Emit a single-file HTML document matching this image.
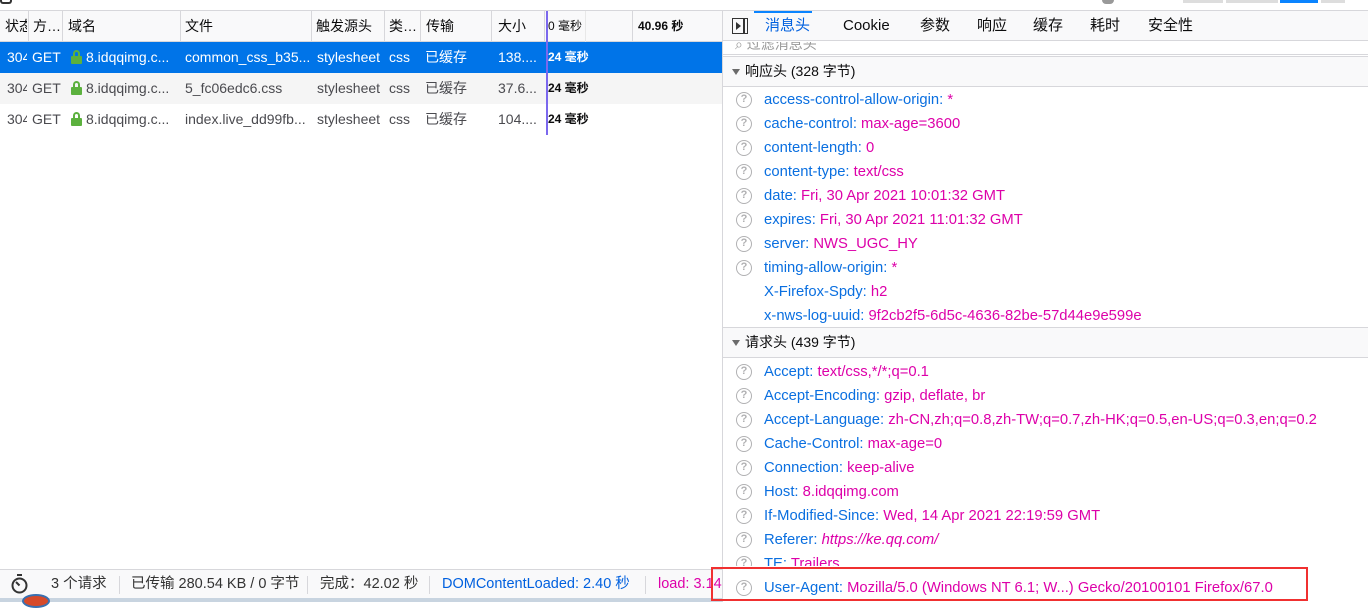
<!DOCTYPE html>
<html><head><meta charset="utf-8"><style>
*{margin:0;padding:0;box-sizing:border-box}
body{width:1368px;height:602px;overflow:hidden;background:#fff;font-family:"Liberation Sans","Noto Sans CJK SC",sans-serif;font-size:14px;color:#0c0c0d;position:relative}
.a{position:absolute;white-space:nowrap}
.top{left:0;top:0;width:1368px;height:11px;border-bottom:1px solid #d7d7db;background:#fff}
.hdr{left:0;top:11px;width:722px;height:31px;background:#f9f9fa;border-bottom:1px solid #d7d7db}
.row{left:0;width:722px;height:31px;line-height:31px}
.c{position:absolute;top:0;overflow:hidden;white-space:nowrap}
.vb{position:absolute;top:0;width:1px;height:31px;background:#d7d7db}
.lock{display:inline-block;width:11px;height:14px;position:relative;vertical-align:-2px;margin-right:4px}
.lock:before{content:"";position:absolute;left:2px;top:0;width:7px;height:8px;border:2px solid #5cb13e;border-bottom:none;border-radius:4px 4px 0 0;box-sizing:border-box}
.lock:after{content:"";position:absolute;left:0;top:6px;width:11px;height:8px;background:#5cb13e;border-radius:1px}
.right{left:722px;top:11px;width:646px;height:591px;border-left:1px solid #d7d7db;background:#fff}
.tabs{left:0;top:0;width:646px;height:30px;background:#f9f9fa;border-bottom:1px solid #d7d7db;font-size:15px;line-height:30px}
.sec{left:0;width:646px;height:31px;background:#f9f9fa;border-top:1px solid #d7d7db;border-bottom:1px solid #d7d7db;line-height:29px;padding-left:22px}
.sec:before{content:"";position:absolute;left:9px;top:12px;border-left:4px solid transparent;border-right:4px solid transparent;border-top:6px solid #6b6b6b}
.kv{left:0;height:24px;line-height:24px;font-size:14.8px}
.q{position:absolute;left:13px;top:4px;width:16px;height:16px;border:1.5px solid #b1b1b3;border-radius:50%;color:#b1b1b3;font-size:11px;line-height:13px;text-align:center;font-weight:bold;font-style:normal}
.k{position:absolute;left:41px;color:#0a6fe0}
.v{color:#dd00a9}
.sb{left:0;top:569px;width:722px;height:30px;background:#f9f9fa;border-top:1px solid #d7d7db;line-height:29px;font-size:14.5px;color:#333}
.sb span{position:absolute;top:0}
.sep{position:absolute;top:6px;width:1px;height:18px;background:#d7d7db}
</style></head><body>
<div class="a top"></div>
<div class="a" style="left:0;top:0;width:12px;height:4px;border:2px solid #333;border-top:none;border-radius:0 0 3px 3px"></div>
<div class="a" style="left:1102px;top:0;width:12px;height:4px;background:#999;border-radius:0 0 6px 6px"></div>
<div class="a" style="left:1183px;top:0;width:40px;height:3px;background:#ddd"></div>
<div class="a" style="left:1226px;top:0;width:52px;height:3px;background:#ddd"></div>
<div class="a" style="left:1280px;top:0;width:38px;height:3px;background:#0a84ff"></div>
<div class="a" style="left:1321px;top:0;width:24px;height:3px;background:#ddd"></div>

<div class="a hdr">
 <span class="c" style="left:5px;line-height:31px;width:22px">状态</span>
 <div class="vb" style="left:28px"></div>
 <span class="c" style="left:33px;line-height:31px">方…</span>
 <div class="vb" style="left:62px"></div>
 <span class="c" style="left:68px;line-height:31px">域名</span>
 <div class="vb" style="left:180px"></div>
 <span class="c" style="left:185px;line-height:31px">文件</span>
 <div class="vb" style="left:311px"></div>
 <span class="c" style="left:316px;line-height:31px">触发源头</span>
 <div class="vb" style="left:384px"></div>
 <span class="c" style="left:389px;line-height:31px">类…</span>
 <div class="vb" style="left:420px"></div>
 <span class="c" style="left:426px;line-height:31px">传输</span>
 <div class="vb" style="left:491px"></div>
 <span class="c" style="left:498px;line-height:31px">大小</span>
 <div class="vb" style="left:544px"></div>
 <span class="c" style="left:548px;line-height:31px;font-size:12px">0 毫秒</span>
 <div class="vb" style="left:585px;background:#e8e8e8"></div>
 <div class="vb" style="left:632px"></div>
 <span class="c" style="left:638px;line-height:31px;font-size:12px;font-weight:bold">40.96 秒</span>
</div>

<div class="a row" style="top:42px;background:#0074e8;color:#fff">
 <span class="c" style="left:7px;width:20px">304</span><span class="c" style="left:32px">GET</span>
 <span class="c" style="left:71px;width:108px"><i class="lock"></i>8.idqqimg.c...</span>
 <span class="c" style="left:185px">common_css_b35...</span><span class="c" style="left:317px">stylesheet</span><span class="c" style="left:389px">css</span><span class="c" style="left:425px">已缓存</span><span class="c" style="left:498px">138....</span>
 <span class="c" style="left:548px;font-size:12px;font-weight:bold">24 毫秒</span>
</div>
<div class="a row" style="top:73px;background:#f5f5f5;color:#4a4a4f">
 <span class="c" style="left:7px;width:20px">304</span><span class="c" style="left:32px">GET</span>
 <span class="c" style="left:71px;width:108px"><i class="lock"></i>8.idqqimg.c...</span>
 <span class="c" style="left:185px">5_fc06edc6.css</span><span class="c" style="left:317px">stylesheet</span><span class="c" style="left:389px">css</span><span class="c" style="left:425px">已缓存</span><span class="c" style="left:498px">37.6...</span>
 <span class="c" style="left:548px;font-size:12px;font-weight:bold;color:#0c0c0d">24 毫秒</span>
</div>
<div class="a row" style="top:104px;color:#4a4a4f">
 <span class="c" style="left:7px;width:20px">304</span><span class="c" style="left:32px">GET</span>
 <span class="c" style="left:71px;width:108px"><i class="lock"></i>8.idqqimg.c...</span>
 <span class="c" style="left:185px">index.live_dd99fb...</span><span class="c" style="left:317px">stylesheet</span><span class="c" style="left:389px">css</span><span class="c" style="left:425px">已缓存</span><span class="c" style="left:498px">104....</span>
 <span class="c" style="left:548px;font-size:12px;font-weight:bold;color:#0c0c0d">24 毫秒</span>
</div>
<div class="a" style="left:546px;top:11px;width:2px;height:124px;background:#7b68ee"></div>

<div class="a sb">
 <span style="left:10px;top:4px;width:19px;height:20px"><svg width="19" height="20" viewBox="0 0 19 20"><rect x="7" y="0" width="5" height="2" fill="#333"/><circle cx="9.5" cy="11.5" r="7" fill="none" stroke="#333" stroke-width="2"/><path d="M9.5 11.5 L6 8" stroke="#333" stroke-width="2"/></svg></span>
 <span style="left:51px">3 个请求</span><div class="sep" style="left:119px"></div>
 <span style="left:131px">已传输 280.54 KB / 0 字节</span><div class="sep" style="left:307px"></div>
 <span style="left:320px">完成：42.02 秒</span><div class="sep" style="left:429px"></div>
 <span style="left:442px;color:#0060df">DOMContentLoaded: 2.40 秒</span><div class="sep" style="left:645px"></div>
 <span style="left:658px;color:#dd00a9">load: 3.14 秒</span>
</div>
<div class="a" style="left:0;top:598px;width:722px;height:4px;background:#c8d4e0"></div>
<div class="a" style="left:22px;top:594px;width:28px;height:14px;border-radius:50%;background:#d64a2a;border:2px solid #3a70b0"></div>

<div class="a right">
 <div class="a tabs">
  <div class="a" style="left:9px;top:7px;width:16px;height:16px;border:1.5px solid #333"></div>
  <div class="a" style="left:13px;top:11px;border-top:4px solid transparent;border-bottom:4px solid transparent;border-left:5px solid #333"></div>
  <div class="a" style="left:20px;top:7px;width:1.5px;height:16px;background:#333"></div>
  <div class="a" style="left:31px;top:0;width:58px;height:2px;background:#0a84ff"></div>
  <span class="a" style="left:42px;color:#0060df">消息头</span>
  <span class="a" style="left:120px">Cookie</span>
  <span class="a" style="left:197px">参数</span>
  <span class="a" style="left:254px">响应</span>
  <span class="a" style="left:310px">缓存</span>
  <span class="a" style="left:367px">耗时</span>
  <span class="a" style="left:425px">安全性</span>
 </div>
 <div class="a" style="left:0;top:31px;width:646px;height:13px;overflow:hidden;border-bottom:1px solid #d7d7db"><span class="a" style="left:12px;top:-8px;color:#999;font-size:14px">⌕ 过滤消息头</span></div>
 <div class="a sec" style="top:45px">响应头 (328 字节)</div>
 <div class="a kv" style="top:77px;width:646px"><i class="q">?</i><span class="k">access-control-allow-origin: <span class="v">*</span></span></div>
 <div class="a kv" style="top:101px;width:646px"><i class="q">?</i><span class="k">cache-control: <span class="v">max-age=3600</span></span></div>
 <div class="a kv" style="top:125px;width:646px"><i class="q">?</i><span class="k">content-length: <span class="v">0</span></span></div>
 <div class="a kv" style="top:149px;width:646px"><i class="q">?</i><span class="k">content-type: <span class="v">text/css</span></span></div>
 <div class="a kv" style="top:173px;width:646px"><i class="q">?</i><span class="k">date: <span class="v">Fri, 30 Apr 2021 10:01:32 GMT</span></span></div>
 <div class="a kv" style="top:197px;width:646px"><i class="q">?</i><span class="k">expires: <span class="v">Fri, 30 Apr 2021 11:01:32 GMT</span></span></div>
 <div class="a kv" style="top:221px;width:646px"><i class="q">?</i><span class="k">server: <span class="v">NWS_UGC_HY</span></span></div>
 <div class="a kv" style="top:245px;width:646px"><i class="q">?</i><span class="k">timing-allow-origin: <span class="v">*</span></span></div>
 <div class="a kv" style="top:269px;width:646px"><span class="k">X-Firefox-Spdy: <span class="v">h2</span></span></div>
 <div class="a kv" style="top:293px;width:646px"><span class="k">x-nws-log-uuid: <span class="v">9f2cb2f5-6d5c-4636-82be-57d44e9e599e</span></span></div>
 <div class="a sec" style="top:316px">请求头 (439 字节)</div>
 <div class="a kv" style="top:349px;width:646px"><i class="q">?</i><span class="k">Accept: <span class="v">text/css,*/*;q=0.1</span></span></div>
 <div class="a kv" style="top:373px;width:646px"><i class="q">?</i><span class="k">Accept-Encoding: <span class="v">gzip, deflate, br</span></span></div>
 <div class="a kv" style="top:397px;width:646px"><i class="q">?</i><span class="k">Accept-Language: <span class="v">zh-CN,zh;q=0.8,zh-TW;q=0.7,zh-HK;q=0.5,en-US;q=0.3,en;q=0.2</span></span></div>
 <div class="a kv" style="top:421px;width:646px"><i class="q">?</i><span class="k">Cache-Control: <span class="v">max-age=0</span></span></div>
 <div class="a kv" style="top:445px;width:646px"><i class="q">?</i><span class="k">Connection: <span class="v">keep-alive</span></span></div>
 <div class="a kv" style="top:469px;width:646px"><i class="q">?</i><span class="k">Host: <span class="v">8.idqqimg.com</span></span></div>
 <div class="a kv" style="top:493px;width:646px"><i class="q">?</i><span class="k">If-Modified-Since: <span class="v">Wed, 14 Apr 2021 22:19:59 GMT</span></span></div>
 <div class="a kv" style="top:517px;width:646px"><i class="q">?</i><span class="k">Referer: <span class="v" style="font-style:italic">https://ke.qq.com/</span></span></div>
 <div class="a kv" style="top:541px;width:646px;height:14px;overflow:hidden"><i class="q">?</i><span class="k">TE: <span class="v">Trailers</span></span></div>
 <div class="a kv" style="top:565px;width:646px"><i class="q">?</i><span class="k">User-Agent: <span class="v">Mozilla/5.0 (Windows NT 6.1; W...) Gecko/20100101 Firefox/67.0</span></span></div>
</div>
<div class="a" style="left:711px;top:567px;width:597px;height:34px;border:2px solid #f03030"></div>
</body></html>
